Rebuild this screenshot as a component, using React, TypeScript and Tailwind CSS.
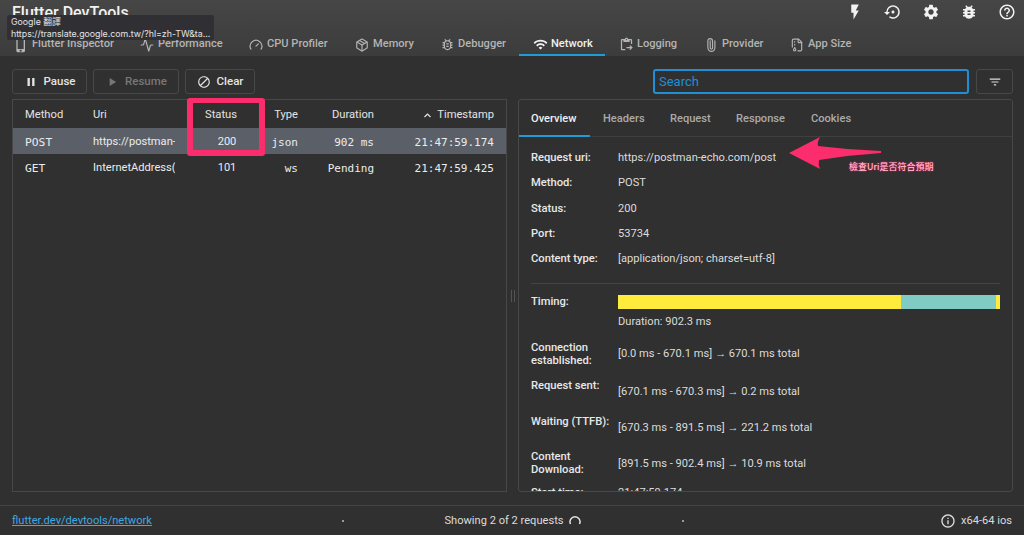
import React from "react";
import { MdFlashOn, MdSettingsBackupRestore, MdSettings, MdBugReport, MdHelpOutline, MdWifi, MdOutlineInfo, MdPause, MdPlayArrow, MdOutlineBlock, MdFilterList, MdOutlinePhoneIphone, MdOutlineContentPasteGo, MdOutlineBugReport } from "react-icons/md";
import { Activity, Gauge, Package, Paperclip, FileArchive } from "lucide-react";

const tabs: [string, React.ReactNode, string][] = [
  ["Flutter Inspector", <MdOutlinePhoneIphone size={16} />, "w-[126px]"],
  ["Performance", <Activity size={14} />, "w-[109px]"],
  ["CPU Profiler", <Gauge size={14} />, "w-[106px]"],
  ["Memory", <Package size={14} />, "w-[85px]"],
  ["Debugger", <MdOutlineBugReport size={15} />, "w-[93px]"],
  ["Network", <MdWifi size={15} />, "w-[86px]"],
  ["Logging", <MdOutlineContentPasteGo size={15} />, "w-[85px]"],
  ["Provider", <Paperclip size={14} className="-rotate-45" />, "w-[86px]"],
  ["App Size", <FileArchive size={14} />, "w-[88px]"],
];

const cols = "grid grid-cols-[68px_82px_70px_53px_76px_120px] px-[12px] items-center";

function Row({ m, u, s, t, d, ts, sel }: { m: string; u: string; s: string; t: string; d: string; ts: string; sel?: boolean }) {
  return (
    <div className={`${cols} h-[26px] text-[11px] text-[#ececec] ${sel ? "bg-[#5b6068]" : ""}`}>
      <span className="font-['DejaVu_Sans_Mono',monospace] text-[11.3px] pt-[4px]">{m}</span>
      <span className="text-[11.1px] overflow-hidden whitespace-nowrap pt-[3px]">{u}</span>
      <span className="text-center text-[11.1px] pl-[34px] pt-[3px]">{s}</span>
      <span className="text-right font-['DejaVu_Sans_Mono',monospace] pt-[4px]">{t}</span>
      <span className="text-right font-['DejaVu_Sans_Mono',monospace] pt-[4px]">{d}</span>
      <span className="text-right font-['DejaVu_Sans_Mono',monospace] pt-[4px]">{ts}</span>
    </div>
  );
}

function Info({ label, value, h, pt = "" }: { label: React.ReactNode; value: React.ReactNode; h: string; pt?: string }) {
  return (
    <div className={`flex ${h} shrink-0`}>
      <div className="w-[87px] shrink-0 font-medium text-[11.2px] text-[#e8e8e8] leading-[13px]">{label}</div>
      <div className={`text-[#dcdcdc] text-[11.1px] leading-[13px] ${pt}`}>{value}</div>
    </div>
  );
}

function Btn({ icon, label, w, dim }: { icon: React.ReactNode; label: string; w: string; dim?: boolean }) {
  return (
    <button className={`${w} h-[25px] flex items-center justify-center gap-[6px] rounded-[3px] border border-[#484848] text-[11.5px] font-medium ${dim ? "text-[#777]" : "text-[#e4e4e4]"}`}>
      {icon}
      {label}
    </button>
  );
}

export default function App() {
  return (
    <div className="relative w-[1024px] h-[535px] overflow-hidden flex flex-col bg-[#303030] font-['Roboto',sans-serif] text-[12px]">
      <header className="h-[56px] shrink-0 bg-gradient-to-b from-[#464646] to-[#3c3c3c] flex flex-col">
        <div className="h-[25px] flex items-start justify-between pl-[12px] pr-[8px]">
          <div className="text-[16px] font-medium text-[#f2f2f2] leading-[25px]">Flutter DevTools</div>
          <div className="flex gap-[20px] pt-[3px] text-[#f2f2f2]">
            <MdFlashOn size={18} />
            <MdSettingsBackupRestore size={18} />
            <MdSettings size={18} />
            <MdBugReport size={18} />
            <MdHelpOutline size={18} />
          </div>
        </div>
        <nav className="flex h-[31px]">
          {tabs.map(([name, icon, w]) => {
            const on = name === "Network";
            return (
              <div key={name} className={`${w} pl-[13px] pt-[10px] flex items-center gap-[3px] text-[11.1px] font-medium border-b-2 ${on ? "border-[#1f9bd6] text-[#f0f0f0]" : "border-transparent text-[#b4b4b4]"}`}>
                <span className="w-[16px] flex justify-center">{icon}</span>
                <span className="whitespace-nowrap">{name}</span>
              </div>
            );
          })}
        </nav>
      </header>

      <main className="flex-1 min-h-0 flex flex-col pl-[12px] pr-[11px] pt-[13px]">
        <div className="flex h-[25px] gap-[6px] shrink-0">
          <Btn icon={<MdPause size={14} />} label="Pause" w="w-[75px]" />
          <Btn icon={<MdPlayArrow size={14} />} label="Resume" w="w-[86px]" dim />
          <Btn icon={<MdOutlineBlock size={14} />} label="Clear" w="w-[70px]" />
          <div className="flex-1" />
          <div className="w-[316px] border-2 border-[#1f8fd6] rounded-[3px] flex items-center px-[4px] text-[13px] text-[#1f8fd6]">Search</div>
          <div className="w-[37px] ml-[1px] border border-[#484848] rounded-[3px] flex items-center justify-center text-[#dcdcdc]">
            <MdFilterList size={14} />
          </div>
        </div>

        <div className="flex gap-[11px] mt-[5px] h-[393px]">
          <section className="w-[495px] border border-[#484848] flex flex-col">
            <div className={`${cols} h-[28px] pt-[3px] text-[11.2px] text-[#e4e4e4]`}>
              <span>Method</span>
              <span>Uri</span>
              <span className="text-center pl-[22px]">Status</span>
              <span className="text-right">Type</span>
              <span className="text-right">Duration</span>
              <span className="flex justify-end items-center gap-[6px]">
                <svg width="7" height="5" viewBox="0 0 7 5" fill="none" stroke="#e4e4e4" strokeWidth="1.2"><path d="M0.5 4L3.5 1L6.5 4" /></svg>
                Timestamp
              </span>
            </div>
            <Row sel m="POST" u="https://postman-" s="200" t="json" d="902 ms" ts="21:47:59.174" />
            <Row m="GET" u="InternetAddress(" s="101" t="ws" d="Pending" ts="21:47:59.425" />
          </section>

          <section className="w-[495px] border border-[#484848] rounded-[3px] overflow-hidden flex flex-col">
            <div className="flex h-[37px] border-b border-[#3f3f3f] shrink-0 font-medium text-[11.1px] text-[#aaa]">
              <div className="w-[71px] pl-[12px] pt-[11px] text-[#f0f0f0] border-b-2 border-[#1f9bd6] h-[37px]">Overview</div>
              <div className="pl-[13px] w-[80px] pt-[11px]">Headers</div>
              <div className="w-[66px] pt-[11px]">Request</div>
              <div className="w-[75px] pt-[11px]">Response</div>
              <div className="pt-[11px]">Cookies</div>
            </div>
            <div className="pl-[12px] pr-[12px] pt-[14px] flex flex-col">
              <Info h="h-[25px]" label="Request uri:" value="https://postman-echo.com/post" />
              <Info h="h-[26px]" label="Method:" value="POST" />
              <Info h="h-[25px]" label="Status:" value="200" />
              <Info h="h-[25px]" label="Port:" value="53734" />
              <Info h="h-[31px]" label="Content type:" value="[application/json; charset=utf-8]" />
              <div className="border-t border-[#444] mb-[11px]" />
              <div className="flex shrink-0">
                <div className="w-[87px] font-medium text-[11.2px] text-[#e8e8e8] leading-[13px]">Timing:</div>
                <div className="w-[382px] flex h-[14px] bg-[#ffeb3b]">
                  <div className="w-[283px]" />
                  <div className="w-[95px] bg-[#80cbc4]" />
                </div>
              </div>
              <div className="pl-[87px] text-[#dcdcdc] text-[11.1px] leading-[13px] mt-[6px] h-[26px] shrink-0">Duration: 902.3 ms</div>
              <Info h="h-[38px]" pt="pt-[6px]" label={<>Connection<br />established:</>} value="[0.0 ms - 670.1 ms] → 670.1 ms total" />
              <Info h="h-[36px]" pt="pt-[6px]" label="Request sent:" value="[670.1 ms - 670.3 ms] → 0.2 ms total" />
              <Info h="h-[35px]" pt="pt-[6px]" label="Waiting (TTFB):" value="[670.3 ms - 891.5 ms] → 221.2 ms total" />
              <Info h="h-[36px]" pt="pt-[7px]" label={<>Content<br />Download:</>} value="[891.5 ms - 902.4 ms] → 10.9 ms total" />
              <Info h="h-[13px]" label="Start time:" value="21:47:59.174" />
            </div>
          </section>
        </div>
      </main>

      <footer className="h-[30px] pt-[1px] shrink-0 border-t border-[#444] grid grid-cols-[1fr_auto_1fr] items-center px-[12px] text-[11.1px] text-[#dcdcdc]">
        <a className="text-[#3fa9e0] underline">flutter.dev/devtools/network</a>
        <div className="flex items-center gap-[5px] pl-[1px]">
          Showing 2 of 2 requests
          <svg width="12" height="12" viewBox="0 0 12 12" fill="none" stroke="#e4e4e4" strokeWidth="1.5"><path d="M1.5 9A5 5 0 1 1 10.5 9" /></svg>
        </div>
        <div className="flex items-center justify-end gap-[5px]"><MdOutlineInfo size={16} />x64-64 ios</div>
      </footer>

      <span className="absolute left-[342px] top-[520px] w-[2px] h-[2px] bg-[#999]" />
      <span className="absolute left-[682px] top-[520px] w-[2px] h-[2px] bg-[#999]" />
      <span className="absolute left-[511px] top-[290px] w-[4px] h-[12px] border-x border-[#555]" />

      <div className="absolute left-[187px] top-[98px] w-[78px] h-[58px] border-[6px] border-t-[5px] border-[#fb2d6d] rounded-[3px]" />

      <svg className="absolute left-[785px] top-[135px]" width="98" height="36" viewBox="0 0 98 36">
        <path d="M4 18 L35 2 Q32 7 33 11 Q65 15 96 16 L96 18 Q65 20 34 25 Q33 30 35 34 Z" fill="#fb2d6d" />
      </svg>
      <div className="absolute left-[849px] top-[160px] text-[9px] leading-[13px] text-[#ffc4d6] font-['Noto_Sans_CJK_TC','Noto_Sans',sans-serif] [text-shadow:0_0_2px_#fb2d6d,0_0_1px_#fb2d6d]">檢查Uri是否符合預期</div>

      <div className="absolute left-[7px] top-[15px] w-[207px] h-[25px] bg-[#303034] rounded-[2px] px-[4px] py-[1px] text-[8.8px] leading-[11.5px] text-[#e4e4e4] font-['Inter','Noto_Sans_CJK_TC',sans-serif] whitespace-nowrap">
        <div>Google 翻譯</div>
        <div>https://translate.google.com.tw/?hl=zh-TW&amp;ta...</div>
      </div>
    </div>
  );
}
